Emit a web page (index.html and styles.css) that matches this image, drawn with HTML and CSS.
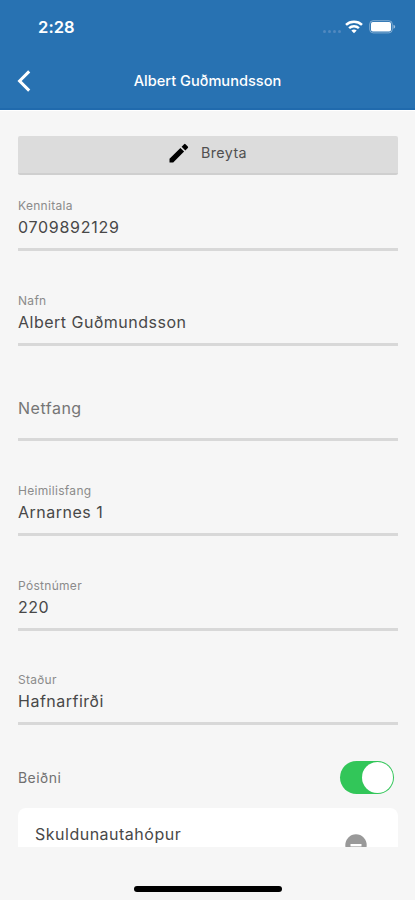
FILE: index.html
```html
<!DOCTYPE html>
<html lang="is">
<head>
<meta charset="utf-8">
<title>Albert Guðmundsson</title>
<link rel="stylesheet" href="styles.css">
</head>
<body>
<div class="screen">
  <header class="header">
    <div class="status">
      <span class="time">2:28</span>
      <div class="indicators">
        <span class="signal"><i></i><i></i><i></i><i></i></span>
        <svg class="wifi" width="18" height="14" viewBox="0 0 18 14" fill="none" stroke="#fff" stroke-width="2.5">
          <path d="M1 4.9C5.4.7 12.6.7 17 4.9"/>
          <path d="M4.1 8.1C6.9 5.5 11.1 5.5 13.9 8.1"/>
          <path d="M9 13.3 6.3 10.5Q9 8.4 11.7 10.5Z" fill="#fff" stroke="none"/>
        </svg>
        <svg class="battery" width="27" height="14" viewBox="0 0 27 14">
          <rect x=".7" y=".7" width="22.6" height="12.2" rx="3.5" fill="none" stroke="#fff" stroke-opacity=".4"/>
          <rect x="2" y="2" width="20" height="9.6" rx="1.8" fill="#fff"/>
          <path d="M24.5 4.8Q26.2 5.3 26.2 6.8T24.5 8.8Z" fill="#fff" fill-opacity=".55"/>
        </svg>
      </div>
    </div>
    <div class="nav">
      <svg class="back" width="14" height="22" viewBox="0 0 14 22" fill="none" stroke="#fff" stroke-width="3"><path d="M12.2 1.4 2.6 11l9.6 9.6"/></svg>
      <h1 class="title">Albert Guðmundsson</h1>
    </div>
  </header>
  <main class="content">
    <button class="edit">
      <svg width="20" height="20" viewBox="0 0 20 20"><path d="M.5 15.8V19.5H4.2L15.1 8.6 11.4 4.9ZM18.8 4.9a1 1 0 0 0 0-1.4L16.5 1.2a1 1 0 0 0-1.4 0L12.6 3.7 16.3 7.4Z"/></svg>
      <span>Breyta</span>
    </button>
    <div class="fields">
      <div class="field"><label>Kennitala</label><span class="value digits">0709892129</span></div>
      <div class="field"><label>Nafn</label><span class="value">Albert Guðmundsson</span></div>
      <div class="field"><span class="placeholder">Netfang</span></div>
      <div class="field"><label>Heimilisfang</label><span class="value">Arnarnes 1</span></div>
      <div class="field"><label>Póstnúmer</label><span class="value">220</span></div>
      <div class="field"><label>Staður</label><span class="value">Hafnarfirði</span></div>
    </div>
    <div class="request">
      <span>Beiðni</span>
      <span class="switch"><span class="knob"></span></span>
    </div>
    <div class="group">
      <span>Skuldunautahópur</span>
      <svg width="22" height="22" viewBox="0 0 22 22"><circle cx="11" cy="11" r="10.7" fill="#999"/><rect x="5.5" y="10" width="11" height="2.4" fill="#fff"/></svg>
    </div>
  </main>
  <footer class="footer"><span class="home"></span></footer>
</div>
</body>
</html>
```
FILE: styles.css
```css
* { box-sizing: border-box; }
body {
  margin: 0;
  background: #f6f6f6;
  font-family: Inter, sans-serif;
  color: #484848;
}
.screen { height: 900px; display: flex; flex-direction: column; overflow: hidden; }

.header {
  flex: none;
  height: 110px;
  background: #2872b2;
  border-bottom: 2px solid #206aad;
  color: #fff;
}
.status {
  height: 53px;
  padding: 0 19px 0 38px;
  display: flex;
  align-items: center;
  justify-content: space-between;
}
.time { font-size: 16.5px; font-weight: 600; letter-spacing: .1px; line-height: 20px; }
.indicators { display: flex; align-items: center; }
.signal { display: flex; gap: 2px; margin: 9px 4px 0 0; }
.signal i { width: 3px; height: 3px; border-radius: 50%; background: #5189c0; }
.battery { margin-left: 6px; }
.nav {
  height: 55px;
  padding: 0 17px;
  display: grid;
  grid-template-columns: 14px 1fr 14px;
  align-items: center;
}
.title { margin: 0; text-align: center; font-size: 14.6px; font-weight: 500; line-height: 20px; }

.content { height: 737px; padding: 25px 17px 0 18px; overflow: hidden; border-top: 1px solid #fff; }
.edit {
  width: 100%;
  height: 39px;
  padding: 0 0 4px;
  border: 0;
  border-bottom: 2px solid #cfcfcf;
  border-radius: 2px;
  background: #dcdcdc;
  display: flex;
  align-items: center;
  justify-content: center;
  gap: 12px;
  font: 400 14.3px/20px Inter, sans-serif;
  letter-spacing: .4px;
  color: #505050;
}
.edit svg { fill: #000; }
.fields { margin-top: 14px; display: grid; gap: 32.9px; }
.field {
  height: 62px;
  padding-top: 9px;
  border-bottom: 3px solid #d8d8d8;
  display: flex;
  flex-direction: column;
}
.field label { font-size: 12px; line-height: 16px; letter-spacing: .3px; color: #8b8b8b; }
.value { margin-top: 3px; font-size: 16px; line-height: 20px; letter-spacing: .5px; }
.digits { letter-spacing: .72px; }
.placeholder { margin-top: 10px; font-size: 16px; line-height: 20px; letter-spacing: .5px; color: #757575; }
.request {
  height: 82.5px;
  padding: 21.5px 4px 0 0;
  display: flex;
  justify-content: space-between;
  align-items: center;
  font-size: 14px;
  letter-spacing: .45px;
  color: #707070;
}
.switch {
  width: 54px;
  height: 33px;
  padding: 1px;
  border-radius: 17px;
  background: #32c659;
  display: flex;
  justify-content: flex-end;
}
.knob { width: 31px; height: 31px; border-radius: 50%; background: #fff; }
.group {
  height: 70px;
  padding: 16px 31px 0 17px;
  border-radius: 8px;
  background: #fff;
  display: flex;
  justify-content: space-between;
  align-items: flex-start;
  font-size: 16px;
  line-height: 20px;
  letter-spacing: .5px;
}
.group svg { margin-top: 10px; }
.footer { flex: 1; display: flex; justify-content: center; align-items: flex-end; padding-bottom: 8px; }
.home { width: 148px; height: 6px; border-radius: 3px; background: #000; }
```
